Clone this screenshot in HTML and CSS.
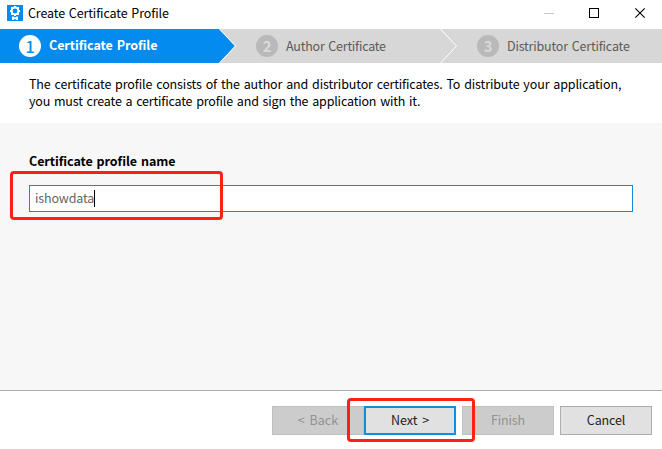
FILE: index.html
```html
<!DOCTYPE html>
<html lang="en">
<head>
<meta charset="utf-8">
<title>Create Certificate Profile</title>
<link rel="stylesheet" href="styles.css">
</head>
<body>
<div class="window">
  <header class="titlebar">
    <svg class="app-icon" viewBox="0 0 16 16" width="16" height="16">
      <rect width="16" height="16" fill="#048bef"/>
      <circle cx="8" cy="6" r="3.400" fill="none" stroke="#fff" stroke-width="2"/>
      <path d="M7 1h2v2H7zM7 9h2v2H7zM3 5h2v2H3zM11 5h2v2h-2zM4 2h2v2H4zM10 2h2v2h-2zM4 8h2v2H4zM10 8h2v2h-2z" fill="#fff"/>
      <path d="M5 11.500h1.500L8 12.500l1.500-1H11V15H9.500L8 13.800 6.500 15H5z" fill="#fff"/>
    </svg>
    <h1 class="title">Create Certificate Profile</h1>
    <svg class="controls" viewBox="0 0 118 29" width="118" height="29" fill="none">
      <path d="M0 13.5h10" stroke="#c8c8c8"/>
      <rect x="45.500" y="8.500" width="9" height="9" stroke="#000"/>
      <path d="M91.300 8.300l9.400 9.400M100.700 8.300l-9.400 9.400" stroke="#000" stroke-width="1.1"/>
    </svg>
  </header>
  <nav class="steps">
    <div class="step active"><span class="num">1</span><span class="label">Certificate Profile</span></div>
    <svg class="arrow" viewBox="0 0 18 34" width="18" height="34"><path d="M0 0L16 17 0 34z" fill="#048bef"/><path d="M.5 0L16.500 17 .5 34" fill="none" stroke="#fff"/></svg>
    <div class="step second"><span class="num">2</span><span class="label">Author Certificate</span></div>
    <svg class="arrow" viewBox="0 0 18 34" width="18" height="34"><path d="M.5 0L16.500 17 .5 34" fill="none" stroke="#fff"/></svg>
    <div class="step third"><span class="num">3</span><span class="label">Distributor Certificate</span></div>
  </nav>
  <section class="intro">
    <p class="line1">The certificate profile consists of the author and distributor certificates. To distribute your application,</p>
    <p class="line2">you must create a certificate profile and sign the application with it.</p>
  </section>
  <main class="content">
    <div class="field-label">Certificate profile name</div>
    <div class="field"><span class="value">ishowdata</span><span class="caret"></span><span class="mark mark-field"></span></div>
  </main>
  <footer class="actions">
    <div class="btn disabled back"><span>&lt; Back</span></div>
    <div class="btn next"><span>Next &gt;</span><span class="mark mark-next"></span></div>
    <div class="btn disabled finish"><span>Finish</span></div>
    <div class="btn cancel"><span>Cancel</span></div>
  </footer>
</div>
</body>
</html>
```
FILE: styles.css
```css
* { box-sizing: border-box; margin: 0; }
body {
  font: 12.5px/17px "Noto Sans CJK SC", "Noto Sans", sans-serif;
  letter-spacing: -.15px;
  word-spacing: 1.2px;
  color: #000;
  background: #fff;
}
.window { width: 662px; height: 449px; display: flex; flex-direction: column; overflow: hidden; }
.titlebar { height: 29px; display: flex; padding-left: 7px; flex: none; }
.app-icon { margin-top: 5px; }
.title { font-size: 12.5px; font-weight: 400; line-height: 17px; letter-spacing: -.12px; margin: 4px auto 0 5px; white-space: nowrap; }
.controls { flex: none; }
.steps { height: 34px; display: flex; background: #d7d7d7; color: #5b5b5b; flex: none; }
.step { display: flex; align-items: center; gap: 8px; white-space: nowrap; }
.label { margin-bottom: 2px; }
.active { width: 219px; padding-left: 19px; background: #048bef; color: #fff; font-weight: 700; letter-spacing: -.05px; }
.active .label { margin-bottom: 4px; }
.second { width: 203px; padding-left: 19px; letter-spacing: -.22px; }
.third { padding-left: 19px; letter-spacing: -.18px; }
.arrow { flex: none; }
.num {
  width: 22px; height: 22px; border-radius: 50%;
  background: #b9b9b9; color: #d9d9d9;
  font: 700 15px/22px "Noto Sans CJK SC", sans-serif; text-align: center;
}
.active .num { background: #fff; color: #048bef; font-size: 16px; font-weight: 500; }
.intro { height: 60px; padding: 12px 0 0 29px; white-space: nowrap; flex: none; }
.line1 { letter-spacing: -.12px; }
.line2 { letter-spacing: -.17px; }
.content { height: 268px; padding: 29px 29px 0; background: #f7f7f7; border-bottom: 1px solid #adadad; flex: none; }
.field-label { font-weight: 700; letter-spacing: -.06px; }
.field {
  position: relative; display: flex; align-items: center;
  height: 27px; margin-top: 16px; padding-left: 5px;
  background: #fff; border: 1px solid #138bdc; color: #666;
}
.value { margin-bottom: 2px; }
.caret { width: 1px; height: 17px; background: #000; }
.mark { position: absolute; border: 3px solid #ff2015; border-radius: 4px; }
.mark-field { left: -20px; top: -15px; width: 213px; height: 49px; }
.mark-next { left: -19px; top: -10px; width: 128px; height: 44px; }
.actions { display: flex; padding: 15px 0 0 272px; }
.btn {
  position: relative; display: flex; align-items: center; justify-content: center;
  width: 92px; height: 29px; padding-bottom: 2px; border: 1px solid #adadad; background: #e1e1e1; color: #222; flex: none;
}
.disabled { background: #ccc; border-color: #bfbfbf; color: #929292; }
.next { border: 2px solid #0a93da; z-index: 1; }
.finish, .cancel { margin-left: 6px; }
.next, .back { word-spacing: 2px; letter-spacing: 0; }
```
